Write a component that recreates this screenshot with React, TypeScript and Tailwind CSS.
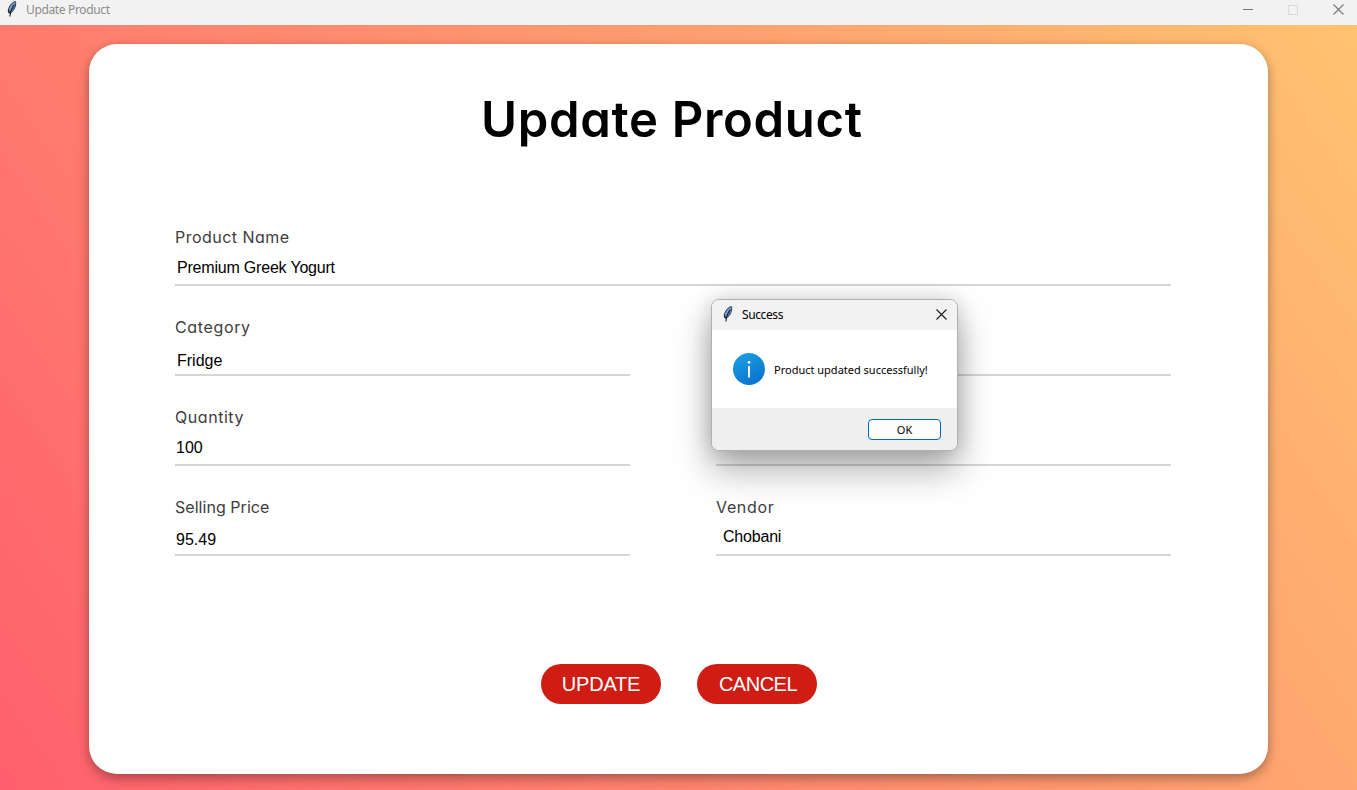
import React from 'react';

const HEADING_FONT = "font-['Inter','Open_Sans',sans-serif] [font-feature-settings:'cv11']";
const ENTRY_FONT = "font-['Liberation_Sans',Arial,sans-serif]";

function Feather({ className = '' }: { className?: string }) {
  return (
    <svg width="10" height="16" viewBox="0 0 10 16" className={className} aria-hidden="true">
      <path d="M8.400.6C5.600 1 2.900 4 1.700 7.500c-.5 1.500-.5 3 .1 4.100l1.400.5c2.200-1 4.300-3.700 5.100-6.900.4-1.600.6-3.400.1-4.600Z" fill="#7ea6d8" stroke="#1a2434" strokeWidth=".9" />
      <path d="M8.200 2C8.400 5.500 6.300 9 3.700 11.200L5.200 7.200Z" fill="#45699f" />
      <path d="M6.900 3.600C4.700 7 3.400 10.500 2.900 15.500" fill="none" stroke="#0b0d12" strokeWidth="1" />
      <path d="M1.700 8.500l.2 3.100 1.200.4" fill="none" stroke="#0b0d12" strokeWidth="1" />
    </svg>
  );
}

function Cross({ size, color }: { size: number; color: string }) {
  return (
    <svg width={size} height={size} viewBox="0 0 11 11" fill="none" stroke={color} strokeWidth="1.1" aria-hidden="true">
      <path d="M.5.5l10 10M10.500.5l-10 10" />
    </svg>
  );
}

type FieldProps = {
  label?: string;
  value?: string;
  labelClass?: string;
  valueClass?: string;
  className?: string;
};

function Field({ label, value, labelClass = '', valueClass = '', className = '' }: FieldProps) {
  return (
    <div className={`h-[60px] border-b-2 border-[#d6d6d6] ${className}`}>
      <div className={`h-[22px] whitespace-nowrap text-[16px] leading-[22px] text-[#3d3d3d] ${HEADING_FONT} ${labelClass}`}>{label}</div>
      <div className={`whitespace-nowrap text-[16px] leading-[18px] text-black ${ENTRY_FONT} ${valueClass}`}>{value}</div>
    </div>
  );
}

function RedButton({ children, className = '' }: { children: React.ReactNode; className?: string }) {
  return (
    <button className={`h-10 w-[120px] rounded-full bg-[#cf1d14] text-[20px] leading-10 text-white ${ENTRY_FONT} ${className}`}>
      {children}
    </button>
  );
}

function SuccessDialog() {
  return (
    <div className="absolute left-[711px] top-[299px] flex h-[152px] w-[247px] flex-col overflow-hidden rounded-lg border border-[#b0b0b0] bg-white font-['Noto_Sans','Open_Sans',sans-serif] text-black shadow-[0_18px_36px_rgba(0,0,0,0.34),0_0_20px_rgba(0,0,0,0.14)]">
      <div className="flex h-[30px] items-start bg-[#f2f2f2] pl-[11px] pr-[10px] pt-[6px]">
        <Feather />
        <span className="ml-[9px] mt-[1px] text-[12px] leading-4 tracking-[-0.4px]">Success</span>
        <span className="ml-auto mt-[3px]"><Cross size={11} color="#1b1b1b" /></span>
      </div>
      <div className="flex h-[78px] items-center pl-[21px]">
        <svg width="32" height="32" viewBox="0 0 32 32" aria-hidden="true">
          <defs>
            <linearGradient id="info" x1="0.2" y1="0" x2="0.8" y2="1">
              <stop offset="0" stopColor="#1c9fe2" />
              <stop offset="1" stopColor="#0a6fce" />
            </linearGradient>
          </defs>
          <circle cx="16" cy="16" r="16" fill="url(#info)" />
          <circle cx="16" cy="9.300" r="1.400" fill="#fff" />
          <path d="M16 13v11.500" stroke="#fff" strokeWidth="1.800" />
        </svg>
        <span className="ml-[9px] mt-[2px] whitespace-nowrap text-[11px] leading-4">Product updated successfully!</span>
      </div>
      <div className="flex flex-1 items-start justify-end bg-[#efefef] pr-4 pt-[11px]">
        <button className="h-[21px] w-[73px] rounded-[4px] border border-[#0067b5] bg-[#fdfdfd] text-[11px] leading-[19px]">OK</button>
      </div>
    </div>
  );
}

export default function App() {
  return (
    <div className="relative flex h-[790px] w-[1357px] flex-col overflow-hidden">
      <header className="flex h-[25px] shrink-0 items-start bg-[#f2f2f2] pl-[7px] pr-[13px]">
        <Feather className="mt-[1px]" />
        <span className="ml-[9px] mt-[2px] font-['Noto_Sans','Open_Sans',sans-serif] text-[12px] leading-4 tracking-[-0.35px] text-[#8b8b8b]">Update Product</span>
        <div className="ml-auto flex h-[19px] items-center gap-[35px]">
          <span className="h-px w-[10px] bg-[#777777]" />
          <span className="size-[10px] border border-[#dcdcdc]" />
          <Cross size={11} color="#777777" />
        </div>
      </header>
      <main className="flex flex-1 justify-center bg-[linear-gradient(56deg,#ff5f6d,#ffc371)] pt-[19px]">
        <section className="h-[730px] w-[1179px] rounded-[28px] bg-white px-[86px] shadow-[0_4px_12px_rgba(0,0,0,0.35)]">
          <h1 className={`ml-[306px] h-[105px] whitespace-nowrap pt-[46px] text-[49px] font-semibold leading-[60px] tracking-[0.68px] text-black ${HEADING_FONT}`}>Update Product</h1>
          <div className="mt-[77px] grid w-[996px] grid-cols-2 gap-x-[86px] gap-y-[30px]">
            <Field label="Product Name" value="Premium Greek Yogurt" labelClass="tracking-[0.48px]" valueClass="pt-[11px] pl-[2px] tracking-[-0.2px]" className="col-span-2" />
            <Field label="Category" value="Fridge" labelClass="tracking-[0.65px]" valueClass="pt-[14px] pl-[2px]" />
            <Field />
            <Field label="Quantity" value="100" labelClass="tracking-[0.55px]" valueClass="pt-[11px] pl-[1px]" />
            <Field />
            <Field label="Selling Price" value="95.49" labelClass="tracking-[0.04px]" valueClass="pt-[13px] pl-[1px]" />
            <Field label="Vendor" value="Chobani" labelClass="tracking-[0.65px]" valueClass="pt-[10px] pl-[7px] tracking-[-0.2px]" />
          </div>
          <div className="ml-[366px] mt-[108px] flex gap-9">
            <RedButton className="tracking-[-0.2px]">UPDATE</RedButton>
            <RedButton className="pl-[2px] tracking-[-0.5px]">CANCEL</RedButton>
          </div>
        </section>
      </main>
      <SuccessDialog />
    </div>
  );
}
